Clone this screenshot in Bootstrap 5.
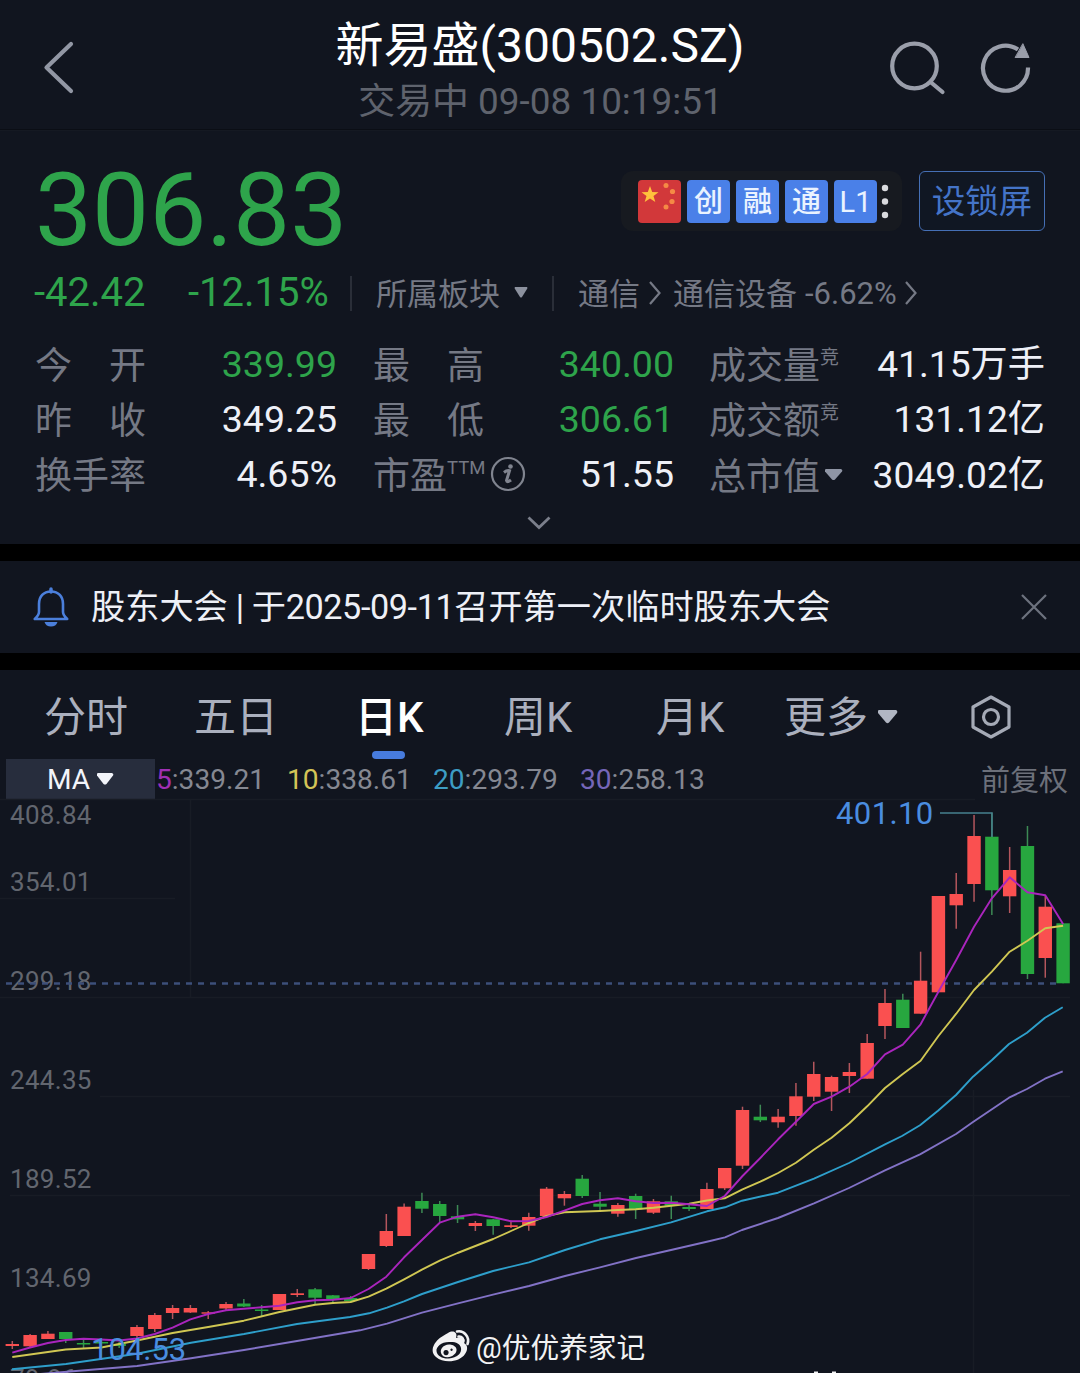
<!DOCTYPE html>
<html lang="zh-CN">
<head>
<meta charset="utf-8">
<meta name="viewport" content="width=device-width, initial-scale=1">
<title>新易盛(300502.SZ)</title>
<link href="https://cdn.jsdelivr.net/npm/bootstrap@5.3.0/dist/css/bootstrap.min.css" rel="stylesheet">
<style>
  html, body { background: #000; overflow: hidden; }
  body { font-family: Roboto, "Noto Sans CJK SC", sans-serif; width: 1080px; height: 1373px; color: #eef0f7; white-space: nowrap; }
  svg { display: block; flex: none; }
  .pane { background: #11151f; }
  .soft { color: #757985; }
  .dim { color: #5f636d; }
  .down { color: #2ea44b; }
  .app-head { height: 130px; border-bottom: 1px solid #0b0e15; }
  .side { width: 190px; }
  .head-mid { padding-top: 18px; }
  .ttl { font-size: 48px; line-height: 56px; color: #fff; }
  .sub { font-size: 36.9px; line-height: 52px; margin-top: 2px; padding-left: 1px; }
  .quote { height: 414px; padding: 41px 35px 0 34px; border-top: 1px solid #151922; }
  .price { font-size: 101.6px; line-height: 77px; height: 78px; padding-left: 1px; }
  .tags { width: 281px; height: 60px; padding-left: 17px; gap: 6px; border-radius: 12px; background: #171a20; margin: -1px 17px 0 0; }
  .tag { width: 43px; height: 43px; border-radius: 4px; background: #4a80e8; color: #eaf3ff; font-size: 29px; line-height: 45px; font-weight: 500; text-align: center; flex: none; }
  .lockbtn, .lockbtn:hover { width: 126px; height: 60px; padding: 0; border: 1px solid #456fb5; border-radius: 6px; color: #4474c8; font-size: 33.5px; line-height: 60px; background: #101723; margin-top: -1px; }
  .chg { height: 36px; margin-top: 25px; font-size: 40px; line-height: 38px; }
  .chg .d1 { width: 154px; }
  .chg .d2 { width: 162px; }
  .chg .sec { font-size: 31px; padding-top: 3px; }
  .chg .pct { padding-top: 1px; }
  .vr1 { width: 2px; height: 35px; background: #2a2e38; }
  .stats { margin-top: 25px; }
  .stat { height: 55px; font-size: 37.5px; line-height: 57px; padding-left: 1px; }
  .c1 { width: 302px; margin-right: 36px; }
  .c2 { width: 301px; margin-right: 35px; }
  .c3 { width: 336px; }
  .c3 .val { font-size: 37.2px; }
  .lab { font-size: 37px; line-height: 61px; color: #757985; }
  .wide { width: 111px; }
  .supx { font-size: 19px; line-height: 20px; align-self: flex-start; margin-top: 12px; }
  .gap17 { height: 17px; background: #000; }
  .notice { height: 92px; padding: 0 33px; font-size: 34.2px; line-height: 90px; }
  .notice .msg { margin-left: 22px; }
  .notice .date { letter-spacing: -.4px; }
  .tabs { height: 89px; font-size: 42px; line-height: 95px; color: #abb0be; }
  .tabs div { position: relative; flex: none; }
  .tabs .on { color: #fff; font-weight: 500; }
  .tabs .on::after { content: ""; position: absolute; left: 17px; top: 81px; width: 33px; height: 8px; border-radius: 4px; background: #477bdd; }
  .legend-row { height: 40px; padding-left: 6px; font-size: 28.1px; line-height: 41px; color: #858892; }
  .mabox { width: 149px; height: 40px; background: #272d3d; color: #f2f4fa; padding-left: 41px; gap: 7px; }
  .adj { font-size: 29px; line-height: 44px; color: #6c707a; margin-right: 12px; }
  .chart { overflow: visible; }
  .chart text { font-family: Roboto, "Noto Sans CJK SC", sans-serif; }
</style>
</head>
<body>
<header class="pane app-head d-flex justify-content-between">
  <div class="side">
    <svg width="100" height="129" fill="none" stroke="#9297a4" stroke-width="4.2" stroke-linecap="round" stroke-linejoin="round"><path d="M71 44 46.5 67.500 71 91"/></svg>
  </div>
  <div class="head-mid text-center">
    <div class="ttl">新易盛(300502.SZ)</div>
    <div class="sub dim">交易中 09-08 10:19:51</div>
  </div>
  <div class="side">
    <svg width="190" height="129" viewBox="890 0 190 129" fill="none" stroke="#9a9eaa" stroke-width="4.200" stroke-linecap="round"><circle cx="914.500" cy="66" r="22.300"/><path d="M930.500 82 942.500 92"/><path d="M1028 67.500A22.500 22.500 0 1 1 1018 49.500" stroke-linecap="butt"/><path d="M1023 44 1029 57.500H1015.500Z" fill="#9a9eaa" stroke-width="1"/></svg>
  </div>
</header>

<section class="pane quote">
  <div class="d-flex align-items-start justify-content-between">
    <div class="price down">306.83</div>
    <div class="d-flex">
      <div class="tags d-flex align-items-center">
        <svg width="43" height="43"><rect width="43" height="43" rx="4" fill="#d2383a"/><path d="M12 6 14.200 12 20.500 12.200 15.500 16 17.300 22 12 18.500 6.700 22 8.500 16 3.500 12.200 9.800 12Z" fill="#ffc23c"/><g fill="#f58a45"><circle cx="28" cy="5.500" r="2.500"/><circle cx="34.500" cy="11.500" r="2.600"/><circle cx="34" cy="21.500" r="2.600"/><circle cx="28" cy="27" r="2.500"/></g></svg>
        <div class="tag">创</div><div class="tag">融</div><div class="tag">通</div><div class="tag fw-normal">L1</div>
        <svg width="8" height="43" fill="#d9dade" style="margin-left:-2px"><circle cx="4" cy="8" r="3.200"/><circle cx="4" cy="21.500" r="3.200"/><circle cx="4" cy="35" r="3.200"/></svg>
      </div>
      <button class="btn lockbtn">设锁屏</button>
    </div>
  </div>
  <div class="chg d-flex align-items-center">
    <div class="d1 down">-42.42</div><div class="d2 down">-12.15%</div>
    <div class="vr1"></div>
    <div class="sec soft" style="margin-left:24px">所属板块</div>
    <svg width="14" height="12" fill="#8c919e" style="margin-left:14px"><path d="M1 0H13Q14 1 13 2L8 10Q7 11 6 10L1 2Q0 1 1 0"/></svg>
    <div class="vr1" style="margin-left:24px"></div>
    <div class="sec soft" style="margin-left:24px">通信</div>
    <svg width="12" height="24" fill="none" stroke="#757985" stroke-width="2.200" style="margin-left:9px"><path d="M1 1 10.500 12 1 23"/></svg>
    <div class="sec soft" style="margin-left:12px">通信设备</div><div class="sec pct soft" style="margin-left:8px">-6.62%</div>
    <svg width="12" height="24" fill="none" stroke="#757985" stroke-width="2.200" style="margin-left:8px"><path d="M1 1 10.500 12 1 23"/></svg>
  </div>
  <div class="stats">
    <div class="stat d-flex">
      <div class="c1 d-flex justify-content-between"><div class="lab wide d-flex justify-content-between"><span>今</span><span>开</span></div><span class="down">339.99</span></div>
      <div class="c2 d-flex justify-content-between"><div class="lab wide d-flex justify-content-between"><span>最</span><span>高</span></div><span class="down">340.00</span></div>
      <div class="c3 d-flex"><span class="lab">成交量</span><span class="lab supx">竞</span><span class="val ms-auto">41.15万手</span></div>
    </div>
    <div class="stat d-flex">
      <div class="c1 d-flex justify-content-between"><div class="lab wide d-flex justify-content-between"><span>昨</span><span>收</span></div><span>349.25</span></div>
      <div class="c2 d-flex justify-content-between"><div class="lab wide d-flex justify-content-between"><span>最</span><span>低</span></div><span class="down">306.61</span></div>
      <div class="c3 d-flex"><span class="lab">成交额</span><span class="lab supx">竞</span><span class="val ms-auto">131.12亿</span></div>
    </div>
    <div class="stat d-flex">
      <div class="c1 d-flex justify-content-between"><span class="lab">换手率</span><span>4.65%</span></div>
      <div class="c2 d-flex"><span class="lab">市盈</span><span class="lab supx" style="font-size:18.500px">TTM</span>
        <svg width="36" height="36" viewBox="0 0 36 36" fill="none" stroke="#80848f" stroke-width="2.200" style="margin:10px 0 0 5px"><circle cx="18" cy="18" r="16"/><circle cx="20.500" cy="10.500" r="2.300" fill="#80848f" stroke="none"/><path d="M14 16.500Q17 14 19.500 14.800L16.500 24.500Q17 27 21 24" stroke-width="3"/></svg>
        <span class="ms-auto">51.55</span></div>
      <div class="c3 d-flex" style="padding-top:1px"><span class="lab">总市值</span>
        <svg width="18" height="12" fill="#8f95a5" style="margin:22px 0 0 5px"><path d="M1 0H16Q18 1 17 2.500L10 10.500Q8.500 11.500 7 10.500L0 2.500Q-1 1 1 0"/></svg>
        <span class="val ms-auto">3049.02亿</span></div>
    </div>
  </div>
  <svg width="24" height="14" fill="none" stroke="#7b7f8b" stroke-width="2.800" style="margin:15px auto 0 493px"><path d="M1.500 1.500 12 11.500 22.500 1.500"/></svg>
</section>

<div class="gap17"></div>
<section class="pane notice d-flex align-items-center">
  <svg width="36" height="40" viewBox="0 0 36 40" fill="none" stroke="#4b7fdb" stroke-width="2.600" stroke-linejoin="round"><path d="M18 4.500C10.500 4.500 6 9.500 6 17V25Q6 28 1.800 32H34.200Q30 28 30 25V17C30 9.500 25.500 4.500 18 4.500Z"/><path d="M18 2V5" stroke-width="3.500" stroke-linecap="round"/><path d="M11.500 35H24.500Q23 39.500 18 39.500T11.500 35" fill="#4b7fdb" stroke="none"/></svg>
  <div class="msg">股东大会<span class="date"> | 于2025-09-11</span>召开第一次临时股东大会</div>
  <svg class="ms-auto" width="26" height="26" fill="none" stroke="#6d727e" stroke-width="2.200"><path d="M1 1 25 25M25 1 1 25"/></svg>
</section>
<div class="gap17"></div>

<section class="pane">
  <nav class="tabs d-flex">
    <div style="width:150px;margin-left:44px">分时</div>
    <div style="width:161px">五日</div>
    <div class="on" style="width:149px">日K</div>
    <div style="width:152px">周K</div>
    <div style="width:128px">月K</div>
    <div class="d-flex">更多
      <svg width="20" height="14" fill="#b1b6c3" style="margin:40px 0 0 10px"><path d="M1 0H18Q20 1 19 3L11 12.500Q9.500 14 8 12.500L0 3Q-1 1 1 0"/></svg></div>
    <svg width="42" height="44" viewBox="0 0 42 44" fill="none" stroke="#a5aab6" stroke-width="3.200" stroke-linejoin="round" style="margin:25px 0 0 72px"><path d="M21 2 39 12V32L21 42 3 32V12Z"/><circle cx="21" cy="22" r="7.500"/></svg>
  </nav>
  <div class="legend-row d-flex">
    <div class="mabox d-flex align-items-center"><span>MA</span><svg width="17" height="12" fill="#f2f4fa"><path d="M1 0H15Q17 1 16 2.500L9.500 11Q8 12 6.500 11L0 2.500Q-1 1 1 0"/></svg></div>
    <div style="width:131px;margin-left:1px"><span style="color:#a02fb5">5</span>:339.21</div>
    <div style="width:146px"><span style="color:#d3c457">10</span>:338.61</div>
    <div style="width:147px"><span style="color:#3d9dc4">20</span>:293.79</div>
    <div><span style="color:#7566b8">30</span>:258.13</div>
    <div class="adj ms-auto">前复权</div>
  </div>
  <svg class="chart" id="chart" width="1080" height="574" viewBox="0 799 1080 574">
    <g stroke="#181c25" stroke-width="1.500"><path d="M0 799.500H975M0 898.500H175M0 997.500H1070M100 1096.500H1070M10 1195.500H1070M190.500 799V997M973.500 1090V1373"/></g>
    <g font-size="26" letter-spacing=".3" fill="#62666f">
      <text x="10" y="824">408.84</text><text x="10" y="891">354.01</text><text x="10" y="990">299.18</text><text x="10" y="1089">244.35</text><text x="10" y="1188">189.52</text><text x="10" y="1287">134.69</text><text x="10" y="1388">79.86</text>
    </g>
    <path d="M6 983.500H1062" stroke="#3c4f7a" stroke-width="2.600" stroke-dasharray="6 6"/>
    <g id="candles"></g>
    <g id="averages" fill="none" stroke-width="1.900" stroke-linejoin="round"></g>
    <path d="M940 813H992V837" fill="none" stroke="#46808f" stroke-width="1.500"/>
    <g font-size="31" fill="#4a8de0"><text x="836" y="824" letter-spacing=".4">401.10</text><text x="91" y="1359.500">104.53</text></g>
    <g fill="#f2f2f3">
      <path fill-rule="evenodd" d="M448 1333C453 1330 458 1332 456 1338C462 1336 466 1338 464 1343C468 1345 468 1350 465 1354C460 1362 444 1364 436 1357C429 1351 434 1341 443 1336Q446 1334 448 1333M449 1342C441 1342 436 1347 436.500 1351C437 1356 443 1359 449 1358.500C457 1358 462 1353 461 1348C460 1343 455 1341.500 449 1342"/>
      <path fill-rule="evenodd" d="M449 1344.500C443 1345 440 1349 441 1353C442 1357 447 1358 451 1356.500C456 1354.500 458 1350 455.500 1347Q453 1344 449 1344.500M446 1350A2.600 2.600 0 1 0 446.100 1350M451.500 1348.500A1.200 1.200 0 1 0 451.600 1348.500"/>
      <path d="M457 1331.500C464 1330 470 1337 467.500 1344M458.500 1336.500C462 1336 464 1339 463 1342" fill="none" stroke="#f2f2f3" stroke-width="2.600" stroke-linecap="round"/>
      <text x="476" y="1357.500" font-size="28.700">@优优养家记</text>
      <path d="M814 1371.500H818V1373H814ZM832 1371.500H836V1373H832Z"/>
    </g>
  </svg>
</section>
<script src="https://cdn.jsdelivr.net/npm/bootstrap@5.3.0/dist/js/bootstrap.bundle.min.js"></script>
<script>
// one entry per trading day: body top, body bottom, wick top, wick bottom, 1 = rising
const days = [
[1344,1346,1341,1349,1],[1335,1346.300,1334,1348,1],[1333.700,1339,1331,1339,1],[1332,1339,1332,1343,0],[1343,1344.500,1340,1348,0],[1342,1343.500,1340,1346,0],[1344,1346,1342,1348,0],[1327,1336,1325,1338,1],[1315,1329,1313,1332,1],[1308,1313,1305,1319,1],
[1308,1312.500,1305,1313,1],[1312.300,1313.700,1311,1319,1],[1304,1308.500,1302,1310,1],[1303.500,1306.500,1299,1307,0],[1309.500,1311,1305,1316,0],[1294,1310,1294,1310,1],[1293.300,1295,1289,1297,1],[1289.300,1297.700,1288,1304,0],[1295.300,1300,1295,1303,0],[1298,1301,1296,1302,0],
[1254,1269,1254,1270,1],[1231,1246,1214,1247,1],[1206.700,1236,1203.500,1236,1],[1201,1208.700,1192.700,1213,0],[1204,1216,1201,1222.700,0],[1216.300,1219.300,1205,1223,0],[1223,1226,1221,1231,1],[1219.300,1226,1219,1234.700,0],[1225.300,1227,1220.700,1228,1],[1217,1225.700,1212.700,1230.700,1],
[1188.700,1216,1187,1216,1],[1194,1198.300,1191,1205.700,1],[1178.700,1196,1175,1198,0],[1203.700,1206.700,1192,1210.700,0],[1205,1213.700,1203,1216.700,1],[1196,1209.300,1193.700,1219,0],[1201.300,1212.700,1199,1214,1],[1201.300,1205.700,1195.700,1219,0],[1207,1209,1203,1211,0],[1189,1209,1182.700,1209,1],
[1168,1188.300,1168,1190,1],[1110,1165.700,1106.700,1169,1],[1116.700,1120.300,1104.700,1122,0],[1116.700,1122.300,1109,1127.700,1],[1096.300,1116,1083,1125.700,1],[1074,1096.700,1061.700,1101,1],[1077,1091.700,1075.700,1111,1],[1072,1076,1063,1093,1],[1043,1078.700,1034,1078.700,1],[1003,1026,989,1039,1],
[999.700,1028,993.700,1028,0],[980.700,1013.700,951.700,1013.700,1],[896,992.300,896,992.300,1],[894,905.300,873,928.700,1],[836,884,815,901.700,1],[836.700,890.300,812.700,915,0],[870,896.300,847,913,1],[846,974,826,979,0],[906.700,958,895,977.700,1],[923.300,983.300,923.300,983.300,0]];
const X = i => 12.3 + 17.81 * i;
document.getElementById('candles').innerHTML = days.map(([t, b, h, l, up], i) => {
  const c = up ? '#fa5050' : '#27a73f', w = up ? '#b4565d' : '#3d8a55';
  return `<path d="M${X(i)} ${h}V${l}" stroke="${w}" stroke-width="1.5"/><rect x="${X(i) - 6.7}" y="${t}" width="13.4" height="${b - t}" fill="${c}"/>`;
}).join('');
const ma5 = [1352.7,1347.5,1343,1340,1338.7,1339.5,1340.5,1338.5,1334,1327.7,1319.3,1314,1310.3,1308.7,1307.3,1305.7,1302.3,1300.3,1299.7,1298,1289,1276.7,1257.3,1240,1222.7,1216.7,1214.3,1217.3,1221.3,1221,1217,1210.7,1204,1200.3,1198.3,1201.3,1203,1202.7,1204.3,1206,1196,1176,1158,1139.3,1121.7,1104,1096.7,1086.7,1074,1054.3,1044.7,1024.3,991.7,960,926.7,898.3,877.3,892.3,895.3,924].map((y, i) => [X(i), y]);
const ma10 = [[0,1357],[2,1352],[3,1349.5],[5,1347.5],[7,1340.5],[8,1336.7],[9,1333],[11,1327],[13,1320.7],[15,1312],[17,1304.7],[18,1303],[19,1302],[20,1296.7],[21,1288.7],[22,1279.3],[23,1269.7],[24,1260.7],[25,1253],[26,1246],[27,1239],[28,1231],[29,1223],[30,1216],[31,1212.3],[33,1211],[34,1210],[35,1209.3],[36,1207.7],[37,1205.7],[38,1203.7],[39,1200.5],[40,1198.3],[41,1189.3],[42,1181.7],[43,1173],[44,1162.7],[45,1149.7],[46,1137.7],[47,1123.3],[48,1106.3],[49,1088],[50,1074],[51,1060.7],[52,1036],[53,1013.7],[54,990],[55,971.7],[56,951.7],[57,940.7],[58,928.3],[59,925.7]].map(([i, y]) => [X(i), y]);
const ma20 = [[12,1369.3],[66,1364],[137,1353.7],[191,1342.7],[244,1334],[297,1324],[350,1317],[369,1313.3],[387,1307.7],[404,1301.3],[422,1294],[458,1282],[493,1271],[529,1262.3],[565,1250],[600,1239.3],[636,1231],[671,1222.3],[707,1211.3],[725,1207.3],[742,1200.7],[778,1192.7],[814,1178.7],[849,1163],[885,1144.3],[902,1136],[920,1125.3],[938,1110.7],[956,1095],[973,1076.7],[992,1060],[1009,1044],[1027,1032.7],[1045,1017.7],[1062.7,1007.3]];
const ma30 = [[40,1374],[73,1371.3],[137,1366],[191,1358.3],[244,1350],[297,1341],[360,1330.3],[387,1323.7],[422,1312.7],[458,1303.3],[493,1294.7],[529,1286],[565,1276],[600,1267.3],[636,1258],[671,1250],[710,1241],[725,1237.3],[742,1230],[778,1218],[814,1203.3],[849,1188],[885,1170.3],[920,1154.3],[956,1134],[973,1122],[1009,1097.7],[1027,1089],[1045,1078.7],[1062.7,1071.3]];
document.getElementById('averages').innerHTML = [[ma30,'#8272c6'],[ma20,'#2e9fcb'],[ma10,'#d0c753'],[ma5,'#aa25bd']].map(([p, c]) => `<polyline points="${p.join(' ')}" stroke="${c}"/>`).join('');
</script>
</body>
</html>
